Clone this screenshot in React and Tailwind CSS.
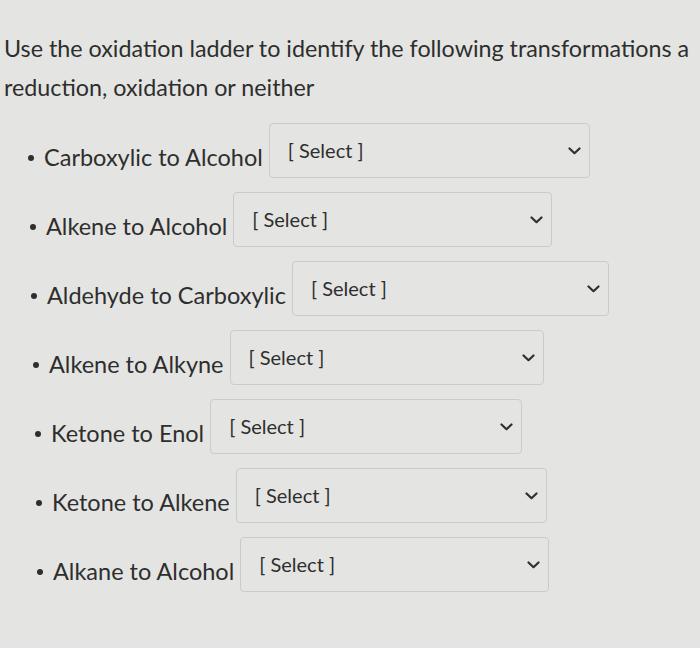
const rows = [
  { label: "Carboxylic to Alcohol", pad: "pl-[28px]", box: "w-[321px]" },
  { label: "Alkene to Alcohol", pad: "pl-[30px]", box: "w-[319px]" },
  { label: "Aldehyde to Carboxylic", pad: "pl-[31px]", box: "w-[317px]" },
  { label: "Alkene to Alkyne", pad: "pl-[33px]", box: "w-[314px]" },
  { label: "Ketone to Enol", pad: "pl-[35px]", box: "w-[312px]" },
  { label: "Ketone to Alkene", pad: "pl-[36px]", box: "w-[311px]" },
  { label: "Alkane to Alcohol", pad: "pl-[37px]", box: "w-[309px]" },
];

const Chevron = () => (
  <svg width="13" height="8" viewBox="0 0 13 8" fill="none">
    <path d="M1.5 1.5 L6.5 6.2 L11.5 1.5" stroke="#2f2f2f" strokeWidth="2.2" strokeLinecap="round" strokeLinejoin="round" />
  </svg>
);

export default function App() {
  return (
    <div className="w-[700px] h-[648px] overflow-hidden bg-[#e4e5e2] text-[#2e2e2e] font-['Lato',sans-serif]">
      {/* question */}
      <p className="pt-[29px] pl-[4px] text-[23.3px] leading-[39px] whitespace-nowrap">
        Use the oxidation ladder to identify the following transformations a
        <br />
        reduction, oxidation or neither
      </p>

      {/* answers */}
      <ul className="mt-[16px] flex flex-col gap-[14px]">
        {rows.map((r) => (
          <li key={r.label} className={`flex items-center h-[55px] ${r.pad}`}>
            <span className="w-[6px] h-[6px] rounded-full bg-[#2e2e2e] mt-[14px]" />
            <span className="ml-[10px] mt-[15px] text-[23.5px] leading-none whitespace-nowrap">
              {r.label}
            </span>
            <div
              className={`ml-[6px] h-full ${r.box} flex items-center justify-between pl-[18px] pr-[8px] border border-[#cbccc9] rounded-[4px]`}
            >
              <span className="text-[20px] leading-none -mt-[2px]">[ Select ]</span>
              <Chevron />
            </div>
          </li>
        ))}
      </ul>
    </div>
  );
}
